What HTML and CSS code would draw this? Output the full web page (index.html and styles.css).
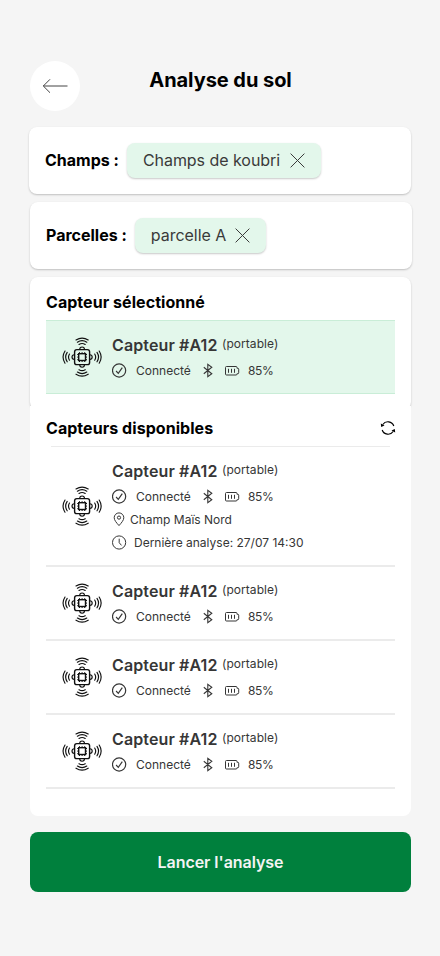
FILE: index.html
```html
<!DOCTYPE html>
<html lang="fr">
<head>
<meta charset="utf-8">
<title>Analyse du sol</title>
<link rel="stylesheet" href="styles.css">
</head>
<body>
<svg class="sprite" aria-hidden="true">
  <symbol id="sensor" viewBox="0 0 40 40">
    <g fill="none" stroke="currentColor" stroke-width="1.15" stroke-linecap="round">
      <rect x="12.6" y="12.6" width="15" height="15" rx="2.2" stroke-width="1.4"/>
      <rect x="16.7" y="16.7" width="6.8" height="6.8" stroke-width="1.4"/>
      <path stroke-width="1" stroke-linecap="butt" d="M17.5 15.2v1.5M20.1 15.2v1.5M22.7 15.2v1.5M17.5 23.5V25M20.1 23.5V25M22.7 23.5V25M15.2 17.5h1.5M15.2 20.1h1.5M15.2 22.7h1.5M23.5 17.5H25M23.5 20.1H25M23.5 22.7H25"/>
      <g id="wave">
        <path d="M17.7 12.4a2.4 2.4 0 0 1 4.8 0M17 7.5q3.1-2 6.2 0M15.4 5.2q4.7-3.1 9.4 0M14 3q6.1-3.9 12.2 0"/>
      </g>
      <use href="#wave" transform="rotate(90 20.1 20.1)"/>
      <use href="#wave" transform="rotate(180 20.1 20.1)"/>
      <use href="#wave" transform="rotate(270 20.1 20.1)"/>
    </g>
  </symbol>
  <symbol id="check" viewBox="0 0 15 15">
    <g fill="none" stroke="currentColor" stroke-width="1.2"><circle cx="7.1" cy="7.5" r="6.6"/><path d="M4.1 8l2.2 2.3 4-5.6"/></g>
  </symbol>
  <symbol id="bluetooth" viewBox="0 0 10 15">
    <path fill="none" stroke="currentColor" stroke-width="1.1" d="M.8 4.3l8 6.4-4 3V1.3l4 3-8 6.4"/>
  </symbol>
  <symbol id="battery" viewBox="0 0 15 11">
    <path fill="none" stroke="currentColor" d="M1.5 1.5h9.5q1 0 1 1v.8h.8q.9 0 .9.900v3.600q0 .9-.9.900H12v.3q0 1-1 1H1.500q-1 0-1-1V2.500q0-1 1-1zM3.500 3.800v4M6.500 3.800v4M9.500 3.800v4"/>
  </symbol>
  <symbol id="pin" viewBox="0 0 12 15">
    <g fill="none" stroke="currentColor"><path d="M6 13.6C3.5 10.7 1.2 8.3 1.2 5.7a4.8 4.8 0 0 1 9.6 0C10.8 8.3 8.5 10.7 6 13.6z"/><circle cx="6" cy="5.6" r="1.6"/></g>
  </symbol>
  <symbol id="clock" viewBox="0 0 15 15">
    <g fill="none" stroke="currentColor"><circle cx="7.1" cy="7.5" r="6.6"/><path d="M7.2 3.7v4l2.3 2.7"/></g>
  </symbol>
  <symbol id="cross" viewBox="0 0 15 15">
    <path fill="none" stroke="currentColor" d="M.6.6l13.8 13.8M14.4.6L.6 14.4"/>
  </symbol>
</svg>

<main class="screen">
  <header class="header">
    <button class="back" aria-label="Retour">
      <svg width="26" height="16" viewBox="0 0 26 16"><path fill="none" stroke="#444" d="M25.5 8H1.300M8 1.300L1.300 8 8 14.700"/></svg>
    </button>
    <h1 class="title">Analyse du sol</h1>
  </header>

  <section class="card filter filter-field">
    <span class="label">Champs :</span>
    <span class="chip"><span class="chip-text">Champs de koubri</span><svg class="cross"><use href="#cross"/></svg></span>
  </section>
  <section class="card filter filter-plot">
    <span class="label">Parcelles :</span>
    <span class="chip"><span class="chip-text">parcelle A</span><svg class="cross"><use href="#cross"/></svg></span>
  </section>

  <section class="card selected">
    <h2 class="heading">Capteur sélectionné</h2>
    <article class="row row-selected">
      <svg class="sensor"><use href="#sensor"/></svg>
      <div class="info">
        <div class="name">Capteur #A12 <small>(portable)</small></div>
        <div class="status"><svg class="check"><use href="#check"/></svg><span class="state">Connecté</span><svg class="bluetooth"><use href="#bluetooth"/></svg><svg class="battery"><use href="#battery"/></svg><span class="level">85%</span></div>
      </div>
    </article>
  </section>

  <section class="available">
    <div class="bar">
      <h2 class="heading">Capteurs disponibles</h2>
      <svg class="refresh" viewBox="0 0 16 16"><path fill="none" stroke="#000" stroke-width="1.2" d="M2.8 4.5A6.200 6.200 0 0 1 13.800 6M13.200 11.500A6.200 6.200 0 0 1 2.200 10"/><path d="M.8 3.400l.4 3.500 3.300-1.300zM15.200 12.600l-.4-3.500-3.300 1.300z"/></svg>
    </div>
    <article class="row">
      <svg class="sensor"><use href="#sensor"/></svg>
      <div class="info">
        <div class="name">Capteur #A12 <small>(portable)</small></div>
        <div class="status"><svg class="check"><use href="#check"/></svg><span class="state">Connecté</span><svg class="bluetooth"><use href="#bluetooth"/></svg><svg class="battery"><use href="#battery"/></svg><span class="level">85%</span></div>
        <div class="detail"><svg class="pin"><use href="#pin"/></svg>Champ Maïs Nord</div>
        <div class="detail"><svg class="clock"><use href="#clock"/></svg>Dernière analyse: 27/07 14:30</div>
      </div>
    </article>
    <article class="row">
      <svg class="sensor"><use href="#sensor"/></svg>
      <div class="info">
        <div class="name">Capteur #A12 <small>(portable)</small></div>
        <div class="status"><svg class="check"><use href="#check"/></svg><span class="state">Connecté</span><svg class="bluetooth"><use href="#bluetooth"/></svg><svg class="battery"><use href="#battery"/></svg><span class="level">85%</span></div>
      </div>
    </article>
    <article class="row">
      <svg class="sensor"><use href="#sensor"/></svg>
      <div class="info">
        <div class="name">Capteur #A12 <small>(portable)</small></div>
        <div class="status"><svg class="check"><use href="#check"/></svg><span class="state">Connecté</span><svg class="bluetooth"><use href="#bluetooth"/></svg><svg class="battery"><use href="#battery"/></svg><span class="level">85%</span></div>
      </div>
    </article>
    <article class="row">
      <svg class="sensor"><use href="#sensor"/></svg>
      <div class="info">
        <div class="name">Capteur #A12 <small>(portable)</small></div>
        <div class="status"><svg class="check"><use href="#check"/></svg><span class="state">Connecté</span><svg class="bluetooth"><use href="#bluetooth"/></svg><svg class="battery"><use href="#battery"/></svg><span class="level">85%</span></div>
      </div>
    </article>
  </section>

  <button class="submit">Lancer l'analyse</button>
</main>
</body>
</html>
```
FILE: styles.css
```css
* { box-sizing: border-box; }

body {
  margin: 0;
  background: #f5f5f5;
  color: #000;
  font-family: Inter, "Liberation Sans", sans-serif;
}

h1, h2 { margin: 0; }
button { border: 0; font: inherit; padding: 0; }
svg { display: block; flex: none; }
.sprite { width: 0; height: 0; position: absolute; }

.screen {
  width: 440px;
  height: 956px;
  padding: 61px 29px 0 30px;
  overflow: hidden;
}

.header {
  display: grid;
  grid-template-columns: 50px 1fr 50px;
  height: 66px;
}

.back {
  width: 50px;
  height: 50px;
  border-radius: 50%;
  background: #fff;
  display: grid;
  place-items: center;
}

.title {
  padding-top: 7px;
  font-size: 20px;
  line-height: 24px;
  font-weight: 700;
  letter-spacing: -.05px;
  text-align: center;
}

.card {
  background: #fff;
  border-radius: 8px;
  box-shadow: 0 1px 2px rgba(0, 0, 0, .22);
}

.filter {
  width: 382px;
  height: 67px;
  margin-bottom: 8px;
  padding: 0 16px;
  display: flex;
  align-items: center;
  gap: 8px;
}

.filter-field { margin-left: -1px; }

.label, .heading {
  font-size: 16px;
  line-height: 19px;
  font-weight: 700;
}

.heading { letter-spacing: .05px; }

.chip {
  height: 35px;
  padding: 0 16px;
  display: flex;
  align-items: center;
  gap: 9.5px;
  border-radius: 8px;
  background: #e3f7eb;
  color: #3a3a3a;
  font-size: 16px;
  letter-spacing: -.04px;
  box-shadow: 0 1px 2px rgba(0, 0, 0, .22);
}

.chip-text {
  padding-bottom: 1px;
  line-height: 18px;
}

.cross { width: 15px; height: 15px; }

.filter-plot .chip { gap: 9px; }

.selected {
  height: 133px;
  padding: 16px 16px 0;
}

.selected .heading { margin-bottom: 8px; }

.row {
  padding: 14px 0 15px 16px;
  display: flex;
  align-items: center;
  gap: 10px;
  border-bottom: 2px solid #ebebeb;
}

.row-selected {
  background: #e3f7eb;
  border: solid #c9edd7;
  border-width: 1px 0;
}

.sensor { width: 40px; height: 40px; color: #111; }

.info {
  display: flex;
  flex-direction: column;
  gap: 8px;
  color: #363636;
  font-size: 12px;
  line-height: 15px;
}

.name {
  display: flex;
  gap: 4.5px;
  font-size: 16px;
  line-height: 20px;
  font-weight: 600;
  letter-spacing: .12px;
}

.name small {
  font-size: 12px;
  line-height: 17px;
  font-weight: 400;
  letter-spacing: .05px;
}

.status, .detail { display: flex; align-items: center; }
.check { width: 15px; height: 15px; margin-right: 9px; }
.state { width: 55px; margin-right: 12px; }
.bluetooth { width: 10px; height: 15px; margin-right: 12px; }
.battery { width: 15px; height: 11px; margin-right: 8px; }
.level { letter-spacing: -.4px; }
.pin { width: 12px; height: 15px; margin: 0 5px 0 1px; }
.clock { width: 15px; height: 15px; margin-right: 7px; }

.available {
  position: relative;
  height: 410px;
  margin-top: -4px;
  padding: 0 16px;
  background: #fff;
  border-radius: 0 0 8px 8px;
}

.bar {
  height: 41px;
  padding-top: 13px;
  display: flex;
  justify-content: space-between;
  background: linear-gradient(#ebebeb, #ebebeb) center bottom / 339px 1px no-repeat;
}

.refresh { width: 16px; height: 16px; margin: 1px -1px 0 0; }

.submit {
  width: 381px;
  height: 60px;
  margin-top: 16px;
  border-radius: 8px;
  background: #00803d;
  color: #f4f4f4;
  font-size: 16px;
  font-weight: 600;
  letter-spacing: -.05px;
}
```
